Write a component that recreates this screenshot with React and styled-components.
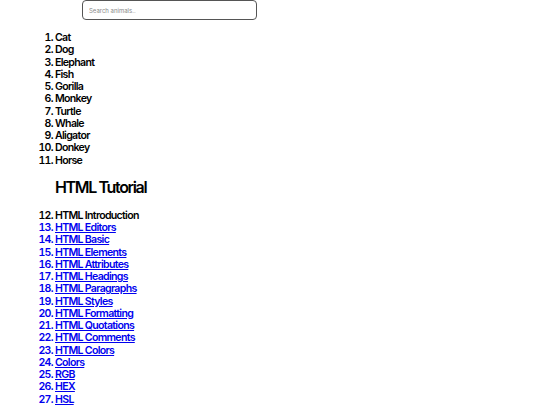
import React from 'react';
import styled, { createGlobalStyle } from 'styled-components';

const Global = createGlobalStyle`
  body {
    margin: 0;
    background: #ffffff;
    font-family: Inter, "Noto Sans", sans-serif;
    color: #000000;
  }
`;

const Page = styled.div`
  padding: 0;
`;

const SearchBox = styled.input`
  display: block;
  box-sizing: border-box;
  margin: 0 0 0 82px;
  width: 175px;
  height: 20px;
  border: 1px solid #555;
  border-radius: 4px;
  padding: 0 6px;
  font-family: Inter, sans-serif;
  font-size: 6px;
  color: #333;
  outline: none;
  &::placeholder {
    color: #8a8a8a;
  }
`;

const List = styled.ol`
  margin: ${p => p.$top}px 0 0 0;
  padding-left: 55px;
  font-size: 10.6px;
  line-height: 12.25px;
  font-weight: 600;
  letter-spacing: -0.7px;
`;

const Item = styled.li``;

const Link = styled.a`
  color: #0000ee;
  text-decoration: underline;
`;

const LinkItem = styled.li`
  color: #0000ee;
`;

const Heading = styled.h2`
  margin: 11px 0 14px 55px;
  font-size: 16px;
  line-height: 18px;
  font-weight: 600;
  letter-spacing: -1.35px;
`;

const animals = ['Cat', 'Dog', 'Elephant', 'Fish', 'Gorilla', 'Monkey', 'Turtle', 'Whale', 'Aligator', 'Donkey', 'Horse'];

const lessons = [
  'HTML Editors', 'HTML Basic', 'HTML Elements', 'HTML Attributes', 'HTML Headings',
  'HTML Paragraphs', 'HTML Styles', 'HTML Formatting', 'HTML Quotations', 'HTML Comments',
  'HTML Colors', 'Colors', 'RGB', 'HEX', 'HSL',
];

export default function App() {
  return (
    <Page>
      <Global />
      <SearchBox placeholder="Search animals.." />
      <List $top={12}>
        {animals.map(a => <Item key={a}>{a}</Item>)}
      </List>
      <Heading>HTML Tutorial</Heading>
      <List $top={0} start={12}>
        <Item>HTML Introduction</Item>
        {lessons.map(l => (
          <LinkItem key={l}><Link href="#">{l}</Link></LinkItem>
        ))}
      </List>
    </Page>
  );
}
